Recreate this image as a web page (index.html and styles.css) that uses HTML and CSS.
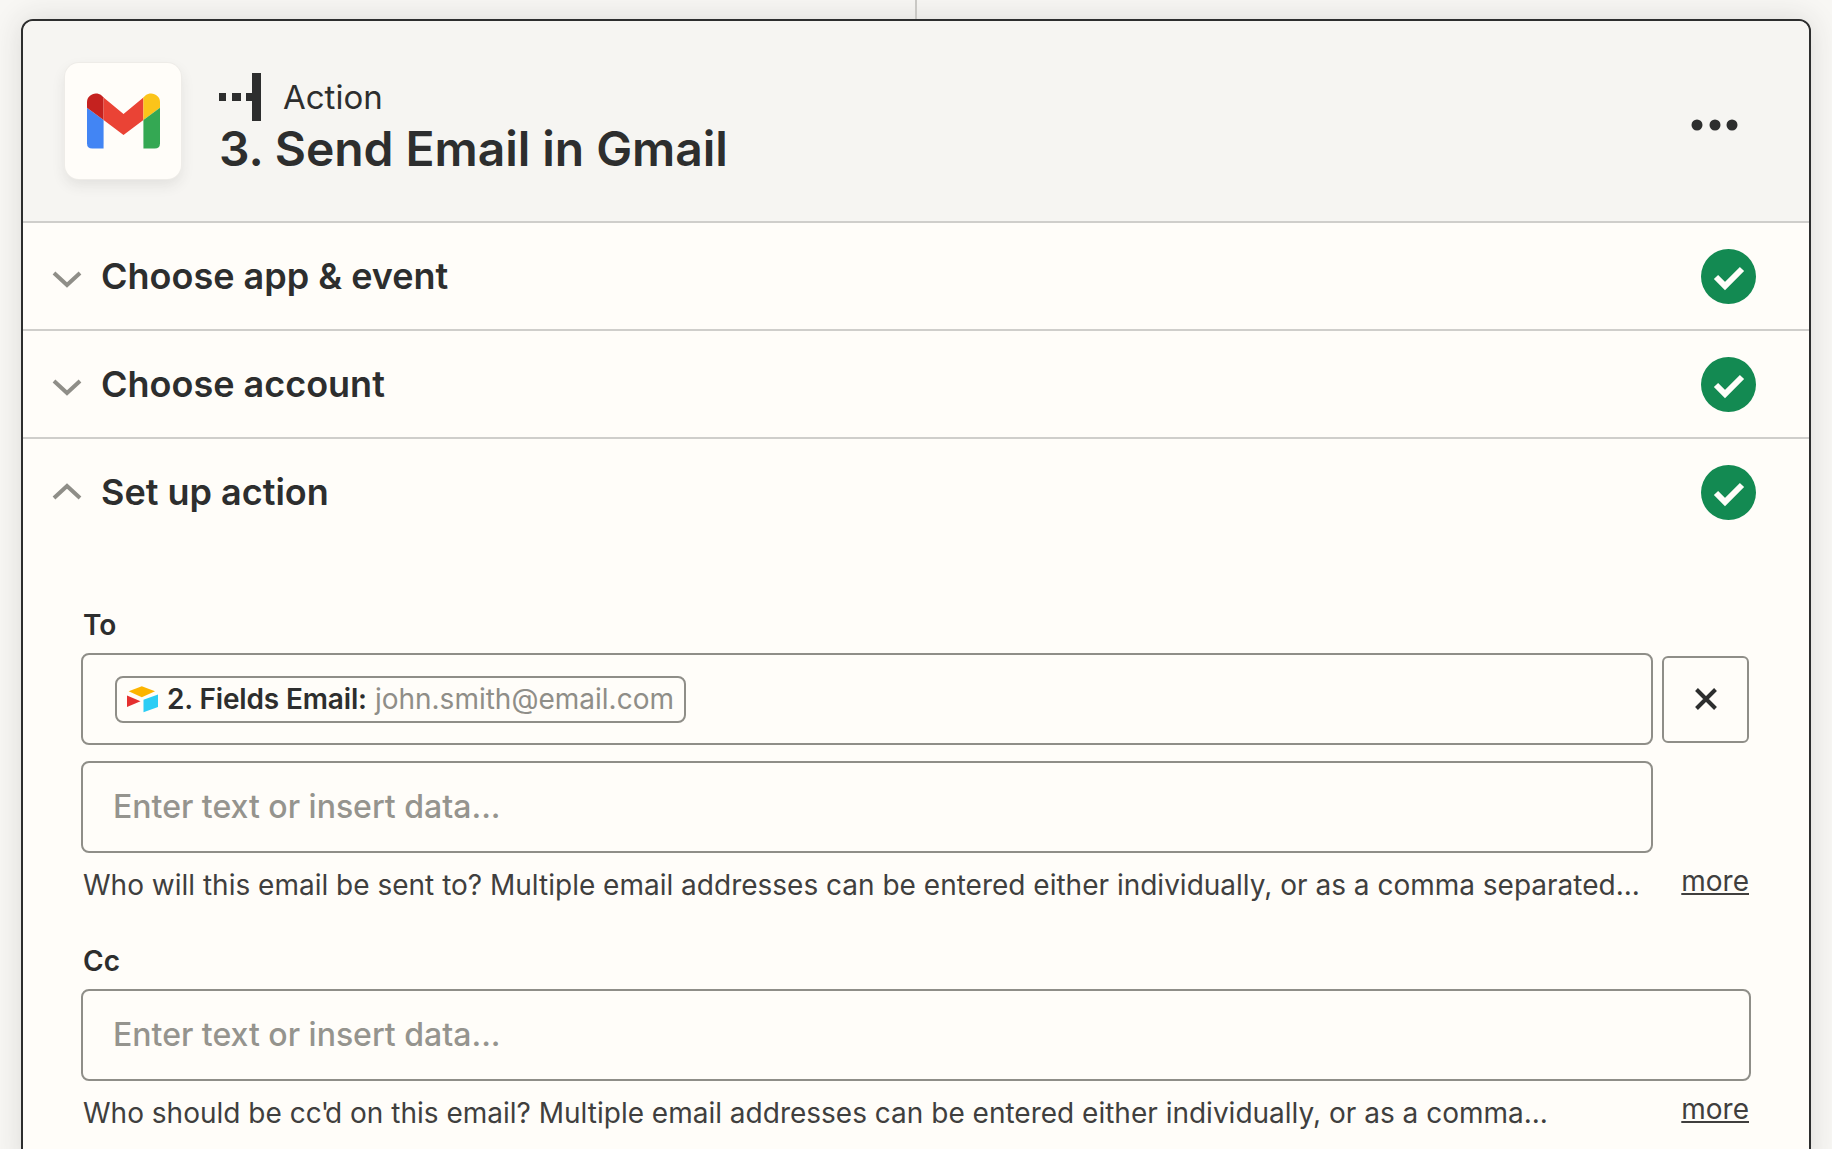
FILE: index.html
```html
<!DOCTYPE html>
<html>

<head>
    <title>Send Email in Gmail</title>
    <link rel="stylesheet" href="styles.css">
</head>

<body>
    <div class="connector"></div>

    <div class="card">
        <!-- step header -->
        <div class="step-header">
            <div class="app-icon">
                <svg width="73" height="56" viewBox="0 0 220 166">
                    <path fill="#4285f4" d="M0 43 L50 80 V166 H16 Q0 166 0 150 Z" />
                    <path fill="#c5221f" d="M0 43 V26 C0 4 26 -8 44 6 L50 12 V80 Z" />
                    <path fill="#ea4335" d="M50 12 L110 62 L170 12 V80 L110 125 L50 80 Z" />
                    <path fill="#fbc41a" d="M170 12 L176 6 C194 -8 220 4 220 26 V43 L170 80 Z" />
                    <path fill="#34a853" d="M220 43 V150 Q220 166 204 166 H170 V80 Z" />
                </svg>
            </div>
            <div class="step-titles">
                <div class="step-type">
                    <svg class="step-icon" width="43" height="48" viewBox="0 0 43 48">
                        <path fill="#2d2e2e" d="M0 20h7v8H0zM13 20h9v8h-9zM27 20h7v8h-7zM33 0h9v48h-9z" />
                    </svg>
                    <span>Action</span>
                </div>
                <h1>3. Send Email in Gmail</h1>
            </div>
            <svg class="more-dots" width="48" height="12" viewBox="0 0 48 12">
                <circle cx="6" cy="6" r="5.5" />
                <circle cx="24" cy="6" r="5.5" />
                <circle cx="41" cy="6" r="5.5" />
            </svg>
        </div>

        <!-- collapsed sections -->
        <div class="section-row">
            <svg class="chevron down" width="30" height="18" viewBox="0 0 30 18">
                <path d="M2 3 L15 15 L28 3" />
            </svg>
            <h2>Choose app &amp; event</h2>
            <svg class="check" width="55" height="55" viewBox="0 0 55 55">
                <circle cx="27.5" cy="27.5" r="27.5" />
                <path d="M15 28 L24 37 L41 20" />
            </svg>
        </div>
        <div class="section-row">
            <svg class="chevron down" width="30" height="18" viewBox="0 0 30 18">
                <path d="M2 3 L15 15 L28 3" />
            </svg>
            <h2>Choose account</h2>
            <svg class="check" width="55" height="55" viewBox="0 0 55 55">
                <circle cx="27.5" cy="27.5" r="27.5" />
                <path d="M15 28 L24 37 L41 20" />
            </svg>
        </div>

        <!-- open section -->
        <div class="section-row open">
            <svg class="chevron" width="30" height="18" viewBox="0 0 30 18">
                <path d="M2 15 L15 3 L28 15" />
            </svg>
            <h2>Set up action</h2>
            <svg class="check" width="55" height="55" viewBox="0 0 55 55">
                <circle cx="27.5" cy="27.5" r="27.5" />
                <path d="M15 28 L24 37 L41 20" />
            </svg>
        </div>

        <div class="fields">
            <div class="field">
                <label>To</label>
                <div class="input-row">
                    <div class="input">
                        <span class="chip">
                            <svg width="31" height="27" viewBox="0 0 94 80">
                                <path fill="#fcb400" d="M5 15 L45 0 L85 15 L45 33 Z" />
                                <path fill="#e5302f" d="M0 28 L41 45 L0 63 Z" />
                                <path fill="#2bcdf5" d="M50 41 L94 25 V63 L50 79 Z" />
                            </svg>
                            <b>2. Fields Email:</b>
                            <span class="chip-value">john.smith@email.com</span>
                        </span>
                    </div>
                    <div class="remove-slot">
                        <button class="remove">
                            <svg width="22" height="22" viewBox="0 0 22 22">
                                <path d="M1.5 1.5 L20.5 20.5 M20.5 1.5 L1.5 20.5" />
                            </svg>
                        </button>
                    </div>
                </div>
                <div class="input-row second">
                    <div class="input placeholder">Enter text or insert data...</div>
                    <div class="remove-slot"></div>
                </div>
                <div class="help">
                    <span>Who will this email be sent to? Multiple email addresses can be entered either individually, or as a comma separated...</span>
                    <a href="#">more</a>
                </div>
            </div>

            <div class="field">
                <label>Cc</label>
                <div class="input-row">
                    <div class="input placeholder">Enter text or insert data...</div>
                </div>
                <div class="help">
                    <span>Who should be cc<span class="apostrophe">'</span>d on this email? Multiple email addresses can be entered either individually, or as a comma...</span>
                    <a href="#">more</a>
                </div>
            </div>
        </div>
    </div>
</body>

</html>
```

FILE: styles.css
```css
html,
body {
    height: 100%;
    overflow: hidden;
}

body {
    margin: 0;
    padding: 19px 21px 0;
    box-sizing: border-box;
    background: #f8f7f4;
    font-family: Inter, "Liberation Sans", sans-serif;
    color: #2d2e2e;
}

/* line coming down from the previous step */
.connector {
    position: absolute;
    top: 0;
    left: 915px;
    width: 2px;
    height: 19px;
    background: #c9c8c4;
}

.card {
    width: 1790px;
    box-sizing: border-box;
    border: 2px solid #2d2e2e;
    border-radius: 12px;
    background: #fffdf9;
    box-shadow: 0 0 30px rgba(45, 46, 46, 0.14);
    overflow: hidden;
}

.step-header {
    display: flex;
    align-items: center;
    height: 202px;
    box-sizing: border-box;
    padding-left: 42px;
    padding-right: 70px;
    background: #f6f5f2;
    border-bottom: 2px solid #cfcecb;
}

.app-icon {
    display: flex;
    align-items: center;
    justify-content: center;
    width: 116px;
    height: 116px;
    background: #fffdf9;
    border-radius: 14px;
    box-shadow: 0 0 0 1px #eeece8, 0 6px 14px rgba(45, 46, 46, 0.1);
}

.step-titles {
    flex: 1;
    margin-left: 38px;
    padding-top: 8px;
}

.step-type {
    display: flex;
    align-items: center;
    gap: 21px;
    font-size: 33px;
    line-height: 48px;
}

.step-titles h1 {
    margin: -1px 0 0;
    font-size: 48px;
    line-height: 58px;
    font-weight: 600;
    letter-spacing: -0.05px;
}

.more-dots {
    margin-top: 7px;
    fill: #2d2e2e;
}

.section-row {
    display: flex;
    align-items: center;
    height: 108px;
    box-sizing: border-box;
    padding-left: 30px;
    padding-right: 53px;
    border-bottom: 2px solid #cfcecb;
}

.section-row.open {
    padding-bottom: 2px;
    border-bottom: none;
}

.section-row h2 {
    flex: 1;
    margin: 0 0 0 18px;
    font-size: 36px;
    font-weight: 600;
}

.chevron {
    margin-left: -1px;
    margin-right: 1px;
}

.chevron.down {
    margin-top: 5px;
}

.chevron path {
    fill: none;
    stroke: #8f8e88;
    stroke-width: 4;
}

.check circle {
    fill: #138a52;
}

.check path {
    fill: none;
    stroke: #fffdf9;
    stroke-width: 6;
}

.fields {
    padding: 58px 58px 0 58px;
}

.field {
    margin-bottom: 36px;
}

.field label {
    display: block;
    margin-bottom: 8px;
    font-size: 28px;
    line-height: 40px;
    font-weight: 600;
    padding-left: 2px;
}

.input-row {
    display: flex;
    align-items: center;
    gap: 9px;
}

.input-row.second {
    margin-top: 16px;
}

.input {
    flex: 1;
    display: flex;
    align-items: center;
    height: 92px;
    box-sizing: border-box;
    padding-left: 30px;
    border: 2px solid #8f8e88;
    border-radius: 8px;
    font-size: 32px;
}

.placeholder {
    padding-bottom: 2px;
    color: #95948e;
    font-weight: 500;
}

.chip {
    display: inline-flex;
    align-items: center;
    height: 47px;
    box-sizing: border-box;
    margin-left: 2px;
    padding: 0 10px;
    border: 2px solid #8f8e88;
    border-radius: 8px;
    font-size: 28px;
    white-space: nowrap;
}

.chip b {
    margin-left: 9px;
    font-weight: 600;
    letter-spacing: -0.15px;
}

.chip-value {
    margin-left: 8px;
    color: #8f8e88;
}

.remove-slot {
    width: 89px;
}

.remove {
    display: flex;
    align-items: center;
    justify-content: center;
    width: 87px;
    height: 87px;
    padding: 0;
    background: none;
    border: 2px solid #8f8e88;
    border-radius: 6px;
}

.remove path {
    fill: none;
    stroke: #2d2e2e;
    stroke-width: 4;
}

.help {
    display: flex;
    justify-content: space-between;
    margin-top: 12px;
    padding-left: 2px;
    padding-right: 2px;
    font-size: 28px;
    line-height: 40px;
    color: #403f3e;
}

.apostrophe {
    margin-left: -1px;
    letter-spacing: -4px;
}

.help a {
    color: #403f3e;
    position: relative;
    top: -4px;
}
```
